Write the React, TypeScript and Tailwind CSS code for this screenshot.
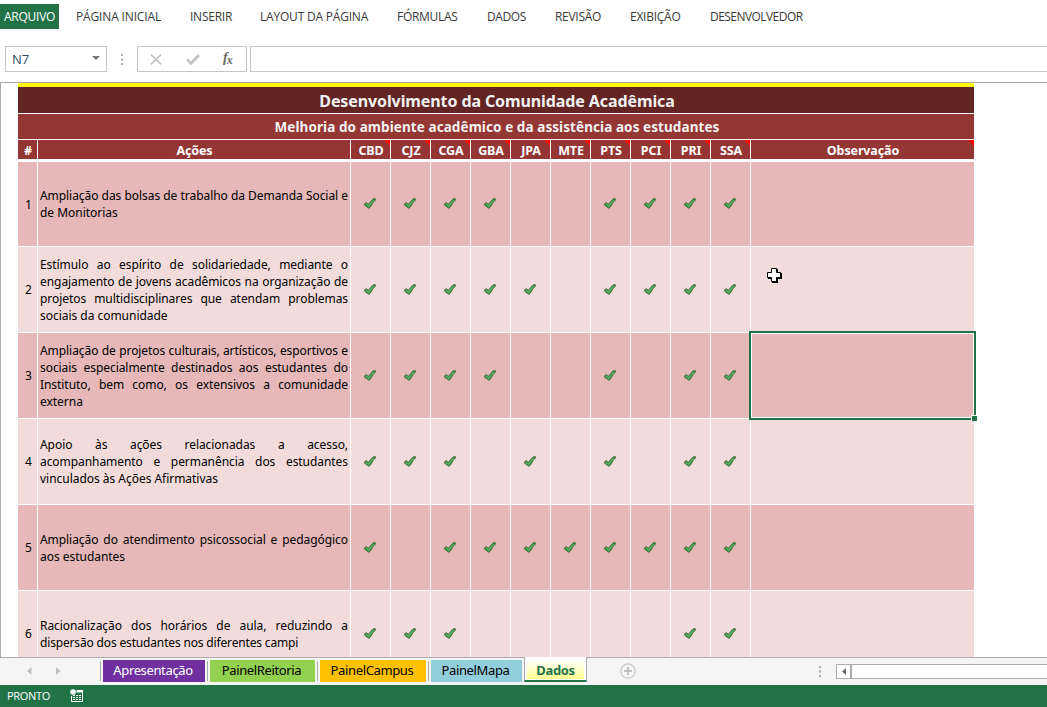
import type { ReactNode } from "react";

const MENU = [
  { label: "PÁGINA INICIAL", cls: "w-[114px] tracking-[-0.15px]" },
  { label: "INSERIR", cls: "w-[70px] tracking-[-0.25px]" },
  { label: "LAYOUT DA PÁGINA", cls: "w-[137px] tracking-[-0.2px]" },
  { label: "FÓRMULAS", cls: "w-[90px] tracking-[-0.3px]" },
  { label: "DADOS", cls: "w-[68px] tracking-[-0.4px]" },
  { label: "REVISÃO", cls: "w-[75px] tracking-[-0.3px]" },
  { label: "EXIBIÇÃO", cls: "w-[80px] tracking-[-0.25px]" },
  { label: "DESENVOLVEDOR", cls: "tracking-[-0.55px]" },
];

const CAMPI = ["CBD", "CJZ", "CGA", "GBA", "JPA", "MTE", "PTS", "PCI", "PRI", "SSA"];

const ROWS = [
  {
    lines: ["Ampliação das bolsas de trabalho da Demanda Social e", "de Monitorias"],
    marks: "1111001111",
  },
  {
    lines: [
      "Estímulo ao espírito de solidariedade, mediante o",
      "engajamento de jovens acadêmicos na organização de",
      "projetos multidisciplinares que atendam problemas",
      "sociais da comunidade",
    ],
    marks: "1111101111",
  },
  {
    lines: [
      "Ampliação de projetos culturais, artísticos, esportivos e",
      "sociais especialmente destinados aos estudantes do",
      "Instituto, bem como, os extensivos a comunidade",
      "externa",
    ],
    marks: "1111001011",
  },
  {
    lines: [
      "Apoio às ações relacionadas a acesso,",
      "acompanhamento e permanência dos estudantes",
      "vinculados às Ações Afirmativas",
    ],
    marks: "1110101011",
  },
  {
    lines: ["Ampliação do atendimento psicossocial e pedagógico", "aos estudantes"],
    marks: "1011111111",
  },
  {
    lines: [
      "Racionalização dos horários de aula, reduzindo a",
      "dispersão dos estudantes nos diferentes campi",
    ],
    marks: "1110000011",
  },
];

const GRID = "grid grid-cols-[19px_312px_repeat(10,39px)_223px] gap-x-px";

function CheckMark() {
  return (
    <svg width="12" height="11" viewBox="0 0 12 11" className="mr-px">
      <path
        d="M0.6 5.8 L2.2 4.6 L4.3 6.4 L9.1 0.9 L11.3 0.6 L11.3 2.2 L9.2 4.3 L6.2 9.3 L4.9 10.3 L0.6 7.2 Z"
        fill="#46a056"
        stroke="#41693a"
        strokeWidth="1"
        strokeLinejoin="round"
      />
      <path d="M2 6.2 L4.9 8.2 L10 2" fill="none" stroke="#5cbb6c" strokeWidth="0.8" />
    </svg>
  );
}

function HeadCell({ children, note }: { children: ReactNode; note?: boolean }) {
  return (
    <div className="relative flex items-center justify-center bg-[#943634] pl-px text-[12.5px] leading-[17px] font-bold tracking-[-0.12px] text-white">
      <span className="relative top-px">{children}</span>
      {note && (
        <svg className="absolute top-0 right-0" width="6" height="6" viewBox="0 0 6 6">
          <path d="M0 0H6V6Z" fill="#ff0000" />
        </svg>
      )}
    </div>
  );
}

function MenuBar() {
  return (
    <nav className="flex h-[33px] items-center font-['Open_Sans',sans-serif] text-[12px] whitespace-nowrap text-[#3a3a3a]">
      <div className="mr-[17px] flex h-[25px] w-[59px] items-center bg-[#217346] pl-1 tracking-[-0.25px] text-white">
        ARQUIVO
      </div>
      {MENU.map((m) => (
        <div key={m.label} className={m.cls}>
          {m.label}
        </div>
      ))}
    </nav>
  );
}

function Dots({ className }: { className: string }) {
  return (
    <svg className={className} width="2" height="11" viewBox="0 0 2 11">
      <path d="M0 0h2v2h-2zM0 4.5h2v2h-2zM0 9h2v2h-2z" fill="#ababab" />
    </svg>
  );
}

function FormulaBar() {
  return (
    <div className="mt-[13px] flex h-[26px] items-center pl-[5px]">
      <div className="flex h-full w-[102px] items-center justify-between border border-[#c6c6c6] pr-[6px] pl-[6px] font-['Open_Sans',sans-serif] text-[13px] text-[#2b4a66]">
        <span className="relative top-px">N7</span>
        <svg width="8" height="4" viewBox="0 0 8 4" className="mb-[2px]">
          <path d="M0 0H8L4 4Z" fill="#777" />
        </svg>
      </div>
      <Dots className="ml-[14px]" />
      <div className="ml-[14px] flex h-full w-[110px] items-center border border-[#c6c6c6] pl-3">
        <svg width="12" height="11" viewBox="0 0 12 11">
          <path d="M1 0.7L11 10.3M11 0.7L1 10.3" stroke="#c3c3c3" strokeWidth="1.7" />
        </svg>
        <svg width="14" height="11" viewBox="0 0 14 11" className="ml-6">
          <path d="M1 5.5L5 9.5L13 1" fill="none" stroke="#c3c3c3" strokeWidth="2.6" />
        </svg>
        <span className="relative -top-px ml-[23px] font-['Liberation_Serif',serif] text-[14px] leading-none font-bold text-[#6a6a6a] italic">
          f<span className="relative top-[2px] -ml-px text-[12px]">x</span>
        </span>
      </div>
      <div className="ml-[3px] h-full flex-1 border border-r-0 border-[#c6c6c6]" />
    </div>
  );
}

function Sheet() {
  return (
    <main className="relative mt-[10px] h-[576px] overflow-hidden border-t border-b border-l border-[#ababab] pl-[17px] font-['Noto_Sans',sans-serif]">
      <div className="w-[956px]">
        <div className="h-1 bg-[#ffff00]" />
        <div className="flex h-[26px] items-center justify-center bg-[#632523] pt-px pl-[2px] text-[16px] font-bold tracking-[-0.1px] text-[#f2f2f2]">
          Desenvolvimento da Comunidade Acadêmica
        </div>
        <div className="mt-px flex h-[25px] items-center justify-center bg-[#943634] pt-px pl-[2px] text-[13.5px] font-bold tracking-[0.08px] text-[#f2f2f2]">
          Melhoria do ambiente acadêmico e da assistência aos estudantes
        </div>
        <div className={`${GRID} mt-px mb-[3px] h-[19px]`}>
          <HeadCell>#</HeadCell>
          <HeadCell>Ações</HeadCell>
          {CAMPI.map((c) => (
            <HeadCell key={c} note>
              {c}
            </HeadCell>
          ))}
          <HeadCell note>Observação</HeadCell>
        </div>
        {ROWS.map((row, i) => {
          const bg = i % 2 === 0 ? "bg-[#e6b8b7]" : "bg-[#f2dcdb]";
          return (
            <div key={i} className={`${GRID} mb-px ${i === 0 ? "h-[84px]" : "h-[85px]"}`}>
              <div className={`${bg} flex items-center justify-center pt-px pl-[2px] text-[12px] text-black`}>{i + 1}</div>
              <div className={`${bg} flex flex-col justify-center px-[2px] text-[12px] leading-[17px] whitespace-nowrap text-black`}>
                {row.lines.map((line, k) => (
                  <div
                    key={k}
                    className={
                      k < row.lines.length - 1
                        ? "tracking-[-0.06px] [text-align-last:justify]"
                        : i === 5
                          ? "tracking-[-0.16px]"
                          : "tracking-[-0.03px]"
                    }
                  >
                    {line}
                  </div>
                ))}
              </div>
              {[...row.marks].map((m, k) => (
                <div key={k} className={`${bg} flex items-center justify-center ${i === 0 ? "pb-px" : ""}`}>
                  {m === "1" && <CheckMark />}
                </div>
              ))}
              <div className={`${bg} relative`}>
                {i === 1 && (
                  <svg className="absolute top-[21px] left-4" width="15" height="15" viewBox="0 0 15 15">
                    <path d="M5 1H11V5H15V11H11V15H5V11H1V5H5Z" fill="#000" />
                    <path d="M4.5 0.5H9.5V4.5H13.5V9.5H9.5V13.5H4.5V9.5H0.5V4.5H4.5Z" fill="#fff" stroke="#000" />
                  </svg>
                )}
                {i === 2 && (
                  <div className="absolute -inset-[2px] z-10 border-2 border-[#217346]">
                    <div className="h-full border border-white" />
                    <div className="absolute -right-[3px] -bottom-[3px] h-[6px] w-[6px] border-t border-l border-white bg-[#217346]" />
                  </div>
                )}
              </div>
            </div>
          );
        })}
      </div>
    </main>
  );
}

function Tab({ children, className }: { children: ReactNode; className: string }) {
  return (
    <div className="flex h-[22px] items-center">
      <div className="mr-[2px] h-5 w-px bg-[#ababab]" />
      <div className={`flex h-[22px] items-center justify-center pr-[2px] ${className}`}>{children}</div>
      <div className="w-[2px]" />
    </div>
  );
}

function TabBar() {
  return (
    <div className="flex h-[27px] items-start bg-[#f5f5f5] font-['Noto_Sans',sans-serif] text-[13px] tracking-[-0.36px] whitespace-nowrap text-black">
      <svg width="34" height="8" viewBox="0 0 34 8" className="mt-[9px] ml-[27px]">
        <path d="M4.5 0V8L0 4ZM29 0V8L33.5 4Z" fill="#c0c0c0" />
      </svg>
      <div className="mt-[2px] ml-[39px] flex">
        <Tab className="w-[102px] bg-[#7030a0] text-white">Apresentação</Tab>
        <Tab className="w-[105px] bg-[#92d050]">PainelReitoria</Tab>
        <Tab className="w-[106px] bg-[#ffc000]">PainelCampus</Tab>
        <Tab className="w-[91px] bg-[#92cddc]">PainelMapa</Tab>
      </div>
      <div className="relative z-10 -mt-px h-[25px] w-[63px] border-x border-b-2 border-x-[#ababab] border-b-[#217346] bg-white px-[2px] pt-[2px] pb-px">
        <div className="flex h-full items-center justify-center bg-linear-to-b from-white to-[#ffff8c] pt-[3px] font-bold text-[#217346]">
          Dados
        </div>
      </div>
      <svg width="17" height="17" viewBox="0 0 17 17" className="mt-[5px] ml-[33px]">
        <circle cx="8" cy="8" r="7.2" fill="none" stroke="#c6c6c6" strokeWidth="1.2" />
        <path d="M8 4V12M4 8H12" stroke="#c0c0c0" strokeWidth="2" />
      </svg>
      <Dots className="mt-2 ml-[182px]" />
      <div className="mt-[6px] ml-[15px] flex h-[15px] flex-1 border border-r-0 border-[#ababab] bg-white">
        <div className="flex w-[15px] items-center justify-center border-r-2 border-[#ababab]">
          <svg width="4" height="7" viewBox="0 0 4 7">
            <path d="M4 0V7L0 3.5Z" fill="#6a6a6a" />
          </svg>
        </div>
      </div>
    </div>
  );
}

function StatusBar() {
  return (
    <footer className="flex h-[22px] items-center bg-[#217346] pl-[7px] font-['Open_Sans',sans-serif] text-[11px] tracking-[-0.3px] text-white">
      <span className="w-[63px]">PRONTO</span>
      <svg width="13" height="13" viewBox="0 0 13 13" className="mt-[-1px]">
        <path d="M7 1.5H12.5V12.5H1.5V7" fill="none" stroke="#fff" />
        <path d="M6.5 1H13V3.5H6.5Z" fill="#fff" />
        <circle cx="3" cy="3" r="2.8" fill="#fff" />
        <path d="M3 6.5H5M6 6.5H8M9 6.5H11M3 8.5H5M6 8.5H8M9 8.5H11M3 10.5H5M6 10.5H8M9 10.5H11" stroke="#fff" />
      </svg>
    </footer>
  );
}

export default function App() {
  return (
    <div className="h-[707px] w-[1047px] overflow-hidden bg-white">
      <MenuBar />
      <FormulaBar />
      <Sheet />
      <TabBar />
      <StatusBar />
    </div>
  );
}
